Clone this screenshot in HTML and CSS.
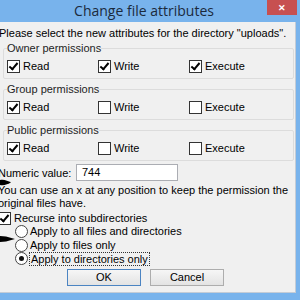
FILE: index.html
```html
<!DOCTYPE html>
<html lang="en">
<head>
    <meta charset="UTF-8">
    <title>Change file attributes</title>
    <link rel="stylesheet" href="styles.css">
</head>
<body>
    <div class="window">
        <div class="titlebar">
            <span class="title">Change file attributes</span>
            <span class="close">&#x2715;</span>
        </div>
        <div class="body">
            <div class="pane">
                <p class="intro">Please select the new attributes for the directory "uploads".</p>

                <!-- Berechtigungen -->
                <fieldset class="perm">
                    <legend>Owner permissions</legend>
                    <div class="row">
                        <label class="check"><span class="box on"></span>Read</label>
                        <label class="check"><span class="box on"></span>Write</label>
                        <label class="check"><span class="box on"></span>Execute</label>
                    </div>
                </fieldset>
                <fieldset class="perm">
                    <legend>Group permissions</legend>
                    <div class="row">
                        <label class="check"><span class="box on"></span>Read</label>
                        <label class="check"><span class="box"></span>Write</label>
                        <label class="check"><span class="box"></span>Execute</label>
                    </div>
                </fieldset>
                <fieldset class="perm">
                    <legend>Public permissions</legend>
                    <div class="row">
                        <label class="check"><span class="box on"></span>Read</label>
                        <label class="check"><span class="box"></span>Write</label>
                        <label class="check"><span class="box"></span>Execute</label>
                    </div>
                </fieldset>

                <div class="numeric">
                    <span class="numeric-label">Numeric value:</span>
                    <span class="input">744</span>
                </div>
                <p class="hint">You can use an x at any position to keep the permission the original files have.</p>

                <label class="check recurse"><span class="box on"></span>Recurse into subdirectories</label>
                <div class="radios">
                    <label class="radio"><span class="dot"></span>Apply to all files and directories</label>
                    <label class="radio"><span class="dot"></span>Apply to files only</label>
                    <label class="radio"><span class="dot on"></span><span class="focus">Apply to directories only</span></label>
                </div>

                <div class="buttons">
                    <span class="btn default">OK</span>
                    <span class="btn">Cancel</span>
                </div>
            </div>
        </div>
    </div>

    <!-- Pfeile (Markierungen) -->
    <svg class="arrow arrow-1" width="12" height="7" viewBox="0 0 12 7"><path d="M0 1 C4 0 8 2 11 3.5 C8 5 4 7 0 6 Z" fill="#000"/></svg>
    <svg class="arrow arrow-2" width="16" height="8" viewBox="0 0 16 8"><path d="M0 1 L6 1.5 L15 4 L6 6.5 L0 7 Z" fill="#000"/></svg>
</body>
</html>
```

FILE: styles.css
```css
body {
    margin: 0;
    width: 300px;
    height: 300px;
    overflow: hidden;
    position: relative;
    font-family: "Liberation Sans", Arial, sans-serif;
    font-size: 11px;
    color: #000;
}
.window {
    width: 300px;
    height: 300px;
    background-color: #78b3ec;
    display: flex;
    flex-direction: column;
}
.titlebar {
    height: 22px;
    flex: none;
    position: relative;
    display: flex;
    align-items: center;
    justify-content: center;
}
.title {
    font-family: "Open Sans", "Noto Sans", sans-serif;
    font-size: 14px;
    color: #1b2a3c;
    margin-left: -12px;
    margin-top: -1px;
}
.close {
    position: absolute;
    top: 0;
    right: 3px;
    width: 30px;
    height: 15px;
    background-color: #c75050;
    color: white;
    font-size: 9px;
    font-weight: bold;
    display: flex;
    align-items: center;
    justify-content: center;
}
.body {
    flex: 1;
    margin: 0 4px 7px 0;
    background-color: #f0f0f0;
    border-right: 1px solid #c4ccd6;
    border-bottom: 1px solid #c4ccd6;
    overflow: hidden;
}
.pane {
    margin-left: -2px;
    padding-top: 4px;
}
.intro {
    margin: 0 0 1px 1px;
    line-height: 14px;
    white-space: nowrap;
}
.perm {
    margin: 0 1px 3px 5px;
    padding: 4px 3px 5px 3px;
    border: 1px solid #dcdcdc;
    border-radius: 2px;
}
.perm legend {
    padding: 0;
    margin-left: 0;
    line-height: 14px;
    color: #1e1e1e;
}
.row {
    display: grid;
    grid-template-columns: 91px 91px auto;
}
.check {
    display: flex;
    align-items: center;
    height: 14px;
    line-height: 14px;
}
.box {
    width: 11px;
    height: 11px;
    border: 1px solid #333;
    background-color: white;
    margin-right: 3px;
    position: relative;
    flex: none;
}
.box.on::after {
    content: "";
    position: absolute;
    left: 3px;
    top: 0px;
    width: 3px;
    height: 7px;
    border: solid #000;
    border-width: 0 2px 2px 0;
    transform: rotate(40deg);
}
.numeric {
    display: flex;
    align-items: center;
    margin-top: 3px;
    height: 17px;
}
.numeric-label {
    width: 78px;
}
.input {
    width: 95px;
    height: 15px;
    border: 1px solid #abadb3;
    background-color: white;
    padding-left: 5px;
    line-height: 15px;
}
.hint {
    margin: 3px 0 0 0;
    line-height: 13px;
}
.recurse {
    margin-top: 1px;
}
.radios {
    padding-left: 17px;
}
.radio {
    display: flex;
    align-items: center;
    height: 13.5px;
    line-height: 13px;
}
.dot {
    width: 11px;
    height: 11px;
    border: 1px solid #444;
    border-radius: 50%;
    background-color: white;
    margin-right: 2px;
    position: relative;
    flex: none;
}
.dot.on::after {
    content: "";
    position: absolute;
    left: 3px;
    top: 3px;
    width: 5px;
    height: 5px;
    border-radius: 50%;
    background-color: #111;
}
.focus {
    outline: 1px dotted #333;
    padding: 0 1px;
    line-height: 12px;
}
.buttons {
    display: flex;
    gap: 9px;
    margin: 3px 0 0 69px;
}
.btn {
    width: 72px;
    height: 15px;
    line-height: 15px;
    text-align: center;
    border: 1px solid #adadad;
    background: linear-gradient(#f6f6f6, #e3e3e3);
}
.btn.default {
    border-color: #4b84c2;
}
.arrow {
    position: absolute;
    left: 0;
}
.arrow-1 {
    top: 179px;
}
.arrow-2 {
    top: 235px;
}
```
